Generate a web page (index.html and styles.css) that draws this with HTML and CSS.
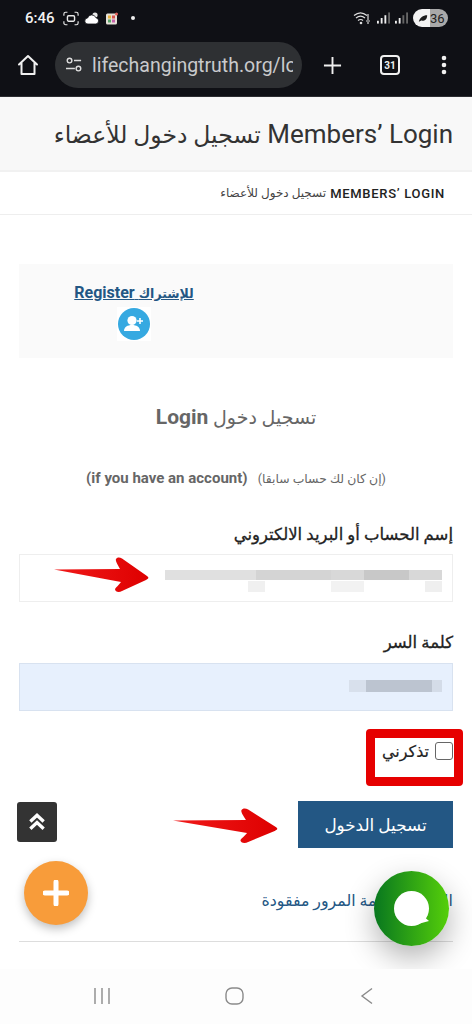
FILE: index.html
```html
<!DOCTYPE html>
<html lang="ar">
<head>
<meta charset="utf-8">
<title>Members’ Login</title>
<link rel="stylesheet" href="styles.css">
</head>
<body>
<div class="phone">
  <div class="status">
    <span class="time">6:46</span>
    <svg class="st-shot" viewBox="0 0 18 16"><path d="M1 5V3a2 2 0 0 1 2-2h2M13 1h2a2 2 0 0 1 2 2v2M17 11v2a2 2 0 0 1-2 2h-2M5 15H3a2 2 0 0 1-2-2v-2" fill="none" stroke="#e8e8e8" stroke-width="1.3"/><rect x="5" y="5" width="8" height="6" rx="1.2" fill="none" stroke="#e8e8e8" stroke-width="1.6"/></svg>
    <svg class="st-cloud" viewBox="0 0 16 14"><circle cx="11" cy="4" r="2.6" fill="#e8e8e8"/><path d="M4 13a3 3 0 0 1-.4-6 4.4 4.4 0 0 1 8.300-.3A3.200 3.200 0 0 1 12 13z" fill="#fff" stroke="#0f1015" stroke-width=".8"/></svg>
    <svg class="st-app" viewBox="0 0 12 12"><rect width="11" height="11" y="1" rx="1.500" fill="#e6e2d8"/><rect x="2" y="3" width="3" height="3" fill="#e9b23c"/><rect x="6" y="3" width="3" height="3" fill="#d9534f"/><rect x="2" y="7" width="3" height="3" fill="#5aa469"/><rect x="6" y="7" width="3" height="3" fill="#c65fa8"/><circle cx="10.500" cy="1.500" r="1.500" fill="#e0605a"/></svg>
    <span class="st-dot"></span>
    <span class="st-spacer"></span>
    <svg class="st-wifi" viewBox="0 0 19 13"><path d="M1 3.500c4-3.300 9-3.300 13 0M3 6c3-2.400 6-2.400 9 0M5 8.500c2-1.400 3.500-1.400 5 0" fill="none" stroke="#ddd" stroke-width="1.200"/><circle cx="8" cy="11" r="1.300" fill="#ddd"/><path d="M15 2v6M15 10v2M13 9h4" stroke="#ddd" stroke-width="1.200"/></svg>
    <svg class="st-sig" viewBox="0 0 14 12"><rect x="0" y="9" width="2" height="3" fill="#eee"/><rect x="4" y="6" width="2" height="6" fill="#eee"/><rect x="8" y="3" width="2" height="9" fill="#eee"/><rect x="12" y="0" width="2" height="12" fill="#666"/></svg>
    <svg class="st-sig" viewBox="0 0 14 12"><rect x="0" y="9" width="2" height="3" fill="#eee"/><rect x="4" y="6" width="2" height="6" fill="#eee"/><rect x="8" y="3" width="2" height="9" fill="#666"/><rect x="12" y="0" width="2" height="12" fill="#666"/></svg>
    <span class="battery"><svg class="leaf" viewBox="0 0 12 10"><path d="M1 9C2 4 6 1 11 1c0 5-3 7-7 6.500z" fill="#1a1a1a"/></svg><span class="bat-num">36</span></span>
  </div>

  <div class="toolbar">
    <svg class="tb-home" viewBox="0 0 24 24"><path d="M3 11.500 12 3l9 8.500M5.500 10v11h13V10" fill="none" stroke="#f0f0f0" stroke-width="2" stroke-linejoin="round" stroke-linecap="round"/></svg>
    <div class="urlbar">
      <svg class="tb-tune" viewBox="0 0 20 18"><circle cx="5" cy="4" r="2.600" fill="none" stroke="#ddd" stroke-width="1.600"/><path d="M10 4h8M1 13h10" stroke="#ddd" stroke-width="1.600"/><circle cx="15" cy="13" r="2.600" fill="none" stroke="#ddd" stroke-width="1.600"/></svg>
      <span class="url">lifechangingtruth.org/login</span>
    </div>
    <svg class="tb-plus" viewBox="0 0 20 20"><path d="M10 1v18M1 10h18" stroke="#f0f0f0" stroke-width="2"/></svg>
    <span class="tabs">31</span>
    <svg class="tb-dots" viewBox="0 0 6 20"><circle cx="3" cy="3" r="2.300" fill="#f0f0f0"/><circle cx="3" cy="10" r="2.300" fill="#f0f0f0"/><circle cx="3" cy="17" r="2.300" fill="#f0f0f0"/></svg>
  </div>

  <main class="main">
    <header class="title-bar"><h1 dir="rtl">Members’ Login <span class="h1-ar">تسجيل دخول للأعضاء</span></h1></header>
    <nav class="crumb" dir="rtl"><b>MEMBERS’ LOGIN</b> تسجيل دخول للأعضاء</nav>

    <div class="content">
      <section class="reg-box">
        <div class="reg-cell">
          <a class="reg-link" href="#" dir="rtl"><span class="reg-ar">للإشتراك</span> Register</a>
          <span class="reg-icon">
            <svg viewBox="0 0 32 32"><circle cx="16" cy="16" r="16" fill="#36a9e1"/><circle cx="14" cy="12.500" r="4.600" fill="#fff"/><path d="M6 23c0-4 3.500-6 8-6s8 2 8 6z" fill="#fff"/><path d="M22 10v6M19 13h6" stroke="#fff" stroke-width="1.600"/></svg>
          </span>
        </div>
      </section>

      <h2 class="login-title" dir="rtl">تسجيل دخول <b>Login</b></h2>
      <p class="login-sub" dir="rtl">(إن كان لك حساب سابقا) &nbsp;<b>(if you have an account)</b></p>

      <label class="lbl lbl-user" dir="rtl">إسم الحساب أو البريد الالكتروني</label>
      <div class="field"><span class="redact redact-user"></span></div>

      <label class="lbl lbl-pass" dir="rtl">كلمة السر</label>
      <div class="field field-fill"><span class="redact redact-pass"></span></div>

      <label class="remember" dir="rtl"><span class="check"></span><span>تذكرني</span></label>

      <div class="submit-row"><button class="submit" type="button">تسجيل الدخول</button></div>

      <a class="lost" href="#" dir="rtl">الاستعادة كلمة المرور مفقودة</a>
      <hr class="rule">
    </div>

    <span class="redframe"></span>
    <svg class="arrow arrow-a" viewBox="0 0 95 36"><use href="#arw"/></svg>
    <svg class="arrow arrow-b" viewBox="0 0 95 36" preserveAspectRatio="none"><use href="#arw"/></svg>
    <span class="to-top"><svg viewBox="0 0 18 18"><path d="M3 8.500 9 3l6 5.500M3 15l6-5.500 6 5.500" fill="none" stroke="#fff" stroke-width="3"/></svg></span>
    <span class="fab-plus"><svg viewBox="0 0 26 26"><path d="M13 2v22M2 13h22" stroke="#fff" stroke-width="5" stroke-linecap="round"/></svg></span>
    <span class="fab-chat"><svg viewBox="0 0 36 36"><circle cx="17.500" cy="17.500" r="17.500" fill="#fff"/><path d="M28 24l7 6-11 3z" fill="#fff"/></svg></span>
  </main>

  <div class="navbar">
    <svg class="nv-recent" viewBox="0 0 18 18"><path d="M2 1v16M9 1v16M16 1v16" stroke="#8a8a8a" stroke-width="1.400"/></svg>
    <svg class="nv-home" viewBox="0 0 20 18"><rect x="1" y="1" width="17" height="16" rx="6" fill="none" stroke="#8a8a8a" stroke-width="1.400"/></svg>
    <svg class="nv-back" viewBox="0 0 14 18"><path d="M12 1.500 2 9l10 7.500" fill="none" stroke="#8a8a8a" stroke-width="1.400"/></svg>
  </div>
</div>

<svg class="defs" aria-hidden="true">
  <defs>
    <linearGradient id="arwg" x1="0" y1="0" x2="1" y2="0"><stop offset="0" stop-color="#f01a1a"/><stop offset="1" stop-color="#de0000"/></linearGradient>
    <symbol id="arw" viewBox="0 0 95 36"><path d="M0 12.500 66 12 C 64 8 61 4 62 2 C 64 -.5 66 .5 68 1.500 L93 19 C 95 20.500 95 21.500 92 23 L68 34 C 65 36 61 35 61 32 C 62 30 65 28 67 25z" fill="url(#arwg)"/></symbol>
  </defs>
</svg>
</body>
</html>
```
FILE: styles.css
```css
* { box-sizing: border-box; }
html, body { margin: 0; padding: 0; background: #fff; }
body { font-family: Roboto, "DejaVu Sans", sans-serif; }

.phone { width: 472px; height: 1024px; display: flex; flex-direction: column; overflow: hidden; }

/* status bar */
.status { height: 36px; background: #0f1015; display: flex; align-items: center; padding: 0 24px 0 25px; flex: none; }
.time { color: #f2f2f2; font-size: 15px; font-weight: 500; width: 38px; }
.st-shot { width: 16px; height: 15px; }
.st-cloud { width: 16px; height: 14px; margin-left: 5px; }
.st-app { width: 12px; height: 13px; margin-left: 6px; }
.st-dot { width: 4px; height: 4px; border-radius: 50%; background: #eee; margin-left: 13px; }
.st-spacer { flex: 1; }
.st-wifi { width: 19px; height: 13px; }
.st-sig { width: 13px; height: 12px; margin-left: 5px; }
.battery { width: 35px; height: 18px; border-radius: 9px; margin-left: 5px; background: linear-gradient(90deg, #f2f2f2 50%, #a9a9a9 50%); display: flex; align-items: center; padding-left: 5px; color: #222; font-size: 13px; }
.leaf { width: 10px; height: 9px; flex: none; }
.bat-num { margin-left: 2px; }

/* browser toolbar */
.toolbar { height: 61px; background: #0f1015; display: flex; align-items: center; flex: none; border-bottom: 1px solid #2c2d31; padding-bottom: 2px; }
.tb-home { width: 24px; height: 24px; margin-left: 16px; flex: none; }
.urlbar { width: 247px; height: 46px; border-radius: 23px; background: #2e3033; margin-left: 15px; display: flex; align-items: center; padding: 0 9px 0 10px; overflow: hidden; flex: none; }
.tb-tune { width: 18px; height: 16px; flex: none; }
.url { color: #c9cacc; font-size: 19.500px; margin-left: 9px; white-space: nowrap; overflow: hidden; }
.tb-plus { width: 19px; height: 19px; margin-left: 21px; flex: none; }
.tabs { width: 20px; height: 20px; border: 2px solid #f0f0f0; border-radius: 4px; margin-left: 38px; color: #f0f0f0; font-size: 10px; font-weight: 700; display: flex; align-items: center; justify-content: center; flex: none; }
.tb-dots { width: 6px; height: 20px; margin-left: 41px; flex: none; }

/* page */
.main { position: relative; flex: 1; overflow: hidden; background: #fff; min-height: 0; }
.title-bar { height: 75px; background: #f8f8f8; border-bottom: 2px solid #f1f1f1; padding: 0 19px; display: flex; align-items: center; }
h1 { margin: 0; width: 100%; font-size: 26px; font-weight: 400; color: #333; white-space: nowrap; }
.h1-ar { font-size: 23.500px; }
.crumb { height: 43px; border-bottom: 1px solid #eee; padding: 0 27px; display: flex; align-items: center; gap: 4px; font-size: 12px; color: #444; white-space: nowrap; }
.crumb b { font-size: 13px; font-weight: 500; color: #222; letter-spacing: .7px; }

.content { padding: 49px 19px 0; }
.reg-box { height: 94px; background: #fafafa; padding-top: 19px; }
.reg-cell { width: 230px; display: flex; flex-direction: column; align-items: center; gap: 3px; }
.reg-link { font-size: 16px; font-weight: 700; color: #235784; text-decoration: underline; line-height: 20px; }
.reg-ar { font-size: 12.500px; }
.reg-icon { width: 34px; height: 34px; background: #fff; display: flex; align-items: center; justify-content: center; }
.reg-icon svg { width: 32px; height: 32px; }

.login-title { margin: 47px 0 0; text-align: center; font-size: 19px; font-weight: 400; color: #666; line-height: 24px; }
.login-title b { font-size: 21px; font-weight: 700; }
.login-sub { margin: 39px 0 0; text-align: center; font-size: 12.400px; color: #666; line-height: 18px; }
.login-sub b { font-size: 15px; font-weight: 700; margin-right: 4px; }

.lbl { display: block; font-size: 16.500px; color: #222; line-height: 24px; -webkit-text-stroke: .3px #222; }
.lbl-user { margin-top: 35px; }
.lbl-pass { margin-top: 29px; }
.field { height: 48px; border: 1px solid #eee; background: #fff; margin-top: 7px; display: flex; align-items: flex-start; justify-content: flex-end; padding: 15px 10px 0 0; }
.field-fill { background: #e7f0fd; border-color: #d8e2f0; margin-top: 8px; padding-top: 16px; }
.redact { display: block; }
.redact-user { width: 277px; height: 22px; background:
  linear-gradient(90deg, #e0e0e0 0 33%, #d4d4d4 33% 60%, #d8d8d8 60% 72%, #c8c8c8 72% 88%, #d8d8d8 88% 100%) top / 100% 10px no-repeat,
  linear-gradient(90deg, transparent 0 30%, #f0f0f0 30% 36%, transparent 36% 60%, #f2f2f2 60% 72%, transparent 72% 94%, #efefef 94%) bottom / 100% 11px no-repeat; }
.redact-pass { width: 93px; height: 12px; background: linear-gradient(90deg, #d8e0ec 0 18%, #bcc4d0 18% 89%, #d4dce8 89%); }

.remember { display: flex; align-items: center; gap: 6px; margin-top: 30px; height: 20px; font-size: 16px; color: #222; -webkit-text-stroke: .2px #222; }
.check { width: 18px; height: 18px; border: 1px solid #666; border-radius: 3px; background: #fff; flex: none; }

.submit-row { display: flex; justify-content: flex-end; margin-top: 40px; }
.submit { width: 155px; height: 47px; background: #235784; color: #fff; border: none; font: 500 16.800px Roboto, "DejaVu Sans", sans-serif; }

.lost { display: block; margin-top: 43px; font-size: 15.800px; color: #235784; text-decoration: none; line-height: 20px; white-space: nowrap; }
.rule { border: 0; border-top: 1px solid #ddd; margin: 30px 0 0; }

/* overlays */
.redframe { position: absolute; left: 366px; top: 632px; width: 97px; height: 57px; border: 9px solid #e60000; border-radius: 4px; }
.arrow { position: absolute; }
.arrow-a { left: 54px; top: 460px; width: 95px; height: 36px; }
.arrow-b { left: 173px; top: 711px; width: 105px; height: 36px; }
.to-top { position: absolute; left: 17px; top: 705px; width: 40px; height: 40px; background: #333; border-radius: 3px; display: flex; align-items: center; justify-content: center; }
.to-top svg { width: 20px; height: 20px; }
.fab-plus { position: absolute; left: 24px; top: 764px; width: 64px; height: 64px; border-radius: 50%; background: #f89c3a; box-shadow: 0 4px 10px rgba(0,0,0,.25); display: flex; align-items: center; justify-content: center; }
.fab-plus svg { width: 26px; height: 26px; }
.fab-chat { position: absolute; left: 374px; top: 774px; width: 75px; height: 75px; border-radius: 50%; background: linear-gradient(90deg, #08771f, #55cf0a); box-shadow: 0 12px 30px rgba(0,0,0,.3); display: flex; align-items: center; justify-content: center; }
.fab-chat svg { width: 36px; height: 36px; margin-left: 1px; }

/* system nav */
.navbar { height: 55px; background: #fdfdfd; flex: none; display: flex; align-items: center; padding-bottom: 2px; }
.nv-recent { width: 18px; height: 18px; margin-left: 93px; flex: none; }
.nv-home { width: 20px; height: 18px; margin-left: 114px; flex: none; }
.nv-back { width: 14px; height: 18px; margin-left: 115px; flex: none; }

.defs { position: absolute; width: 0; height: 0; }
```
